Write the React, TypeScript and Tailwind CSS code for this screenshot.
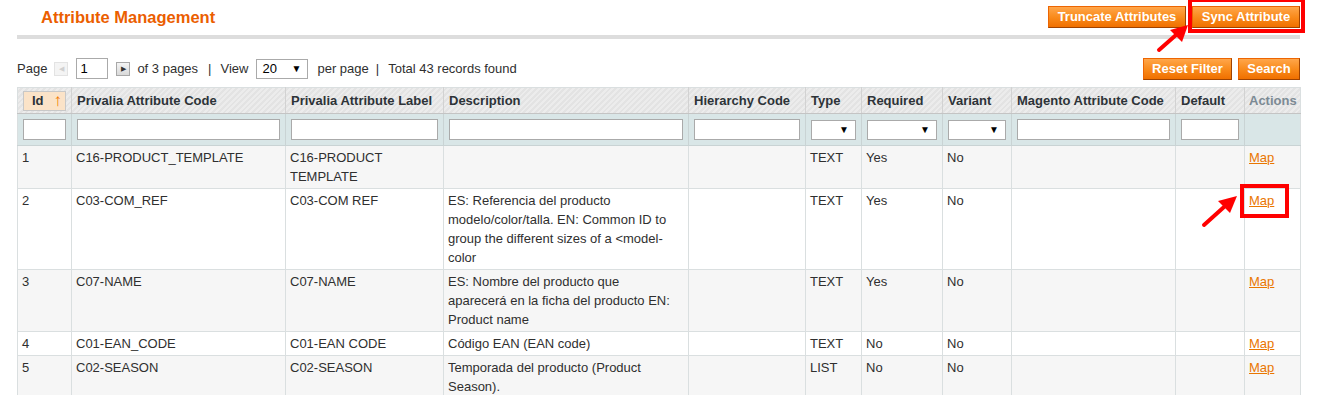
import React from "react";

const cols = [54, 214, 158, 245, 117, 56, 81, 69, 164, 69, 56];

const headers = [
  "Id",
  "Privalia Attribute Code",
  "Privalia Attribute Label",
  "Description",
  "Hierarchy Code",
  "Type",
  "Required",
  "Variant",
  "Magento Attribute Code",
  "Default",
  "Actions",
];

type Row = {
  id: string;
  code: string;
  label: string[];
  desc: string[];
  type: string;
  required: string;
  variant: string;
};

const rows: Row[] = [
  { id: "1", code: "C16-PRODUCT_TEMPLATE", label: ["C16-PRODUCT", "TEMPLATE"], desc: [], type: "TEXT", required: "Yes", variant: "No" },
  {
    id: "2",
    code: "C03-COM_REF",
    label: ["C03-COM REF"],
    desc: ["ES: Referencia del producto", "modelo/color/talla. EN: Common ID to", "group the different sizes of a <model-", "color"],
    type: "TEXT",
    required: "Yes",
    variant: "No",
  },
  {
    id: "3",
    code: "C07-NAME",
    label: ["C07-NAME"],
    desc: ["ES: Nombre del producto que", "aparecerá en la ficha del producto EN:", "Product name"],
    type: "TEXT",
    required: "Yes",
    variant: "No",
  },
  { id: "4", code: "C01-EAN_CODE", label: ["C01-EAN CODE"], desc: ["Código EAN (EAN code)"], type: "TEXT", required: "No", variant: "No" },
  {
    id: "5",
    code: "C02-SEASON",
    label: ["C02-SEASON"],
    desc: ["Temporada del producto (Product", "Season)."],
    type: "LIST",
    required: "No",
    variant: "No",
  },
];

function OrangeButton({ children, className = "" }: { children: React.ReactNode; className?: string }) {
  return (
    <button
      type="button"
      className={`h-[22px] px-[8px] text-[13px] font-bold text-white leading-none border border-t-[#ed6502] border-l-[#ed6502] border-b-[#a04300] border-r-[#a04300] bg-[linear-gradient(#ffa64a,#f98b1c_50%,#f07000)] ${className}`}
    >
      {children}
    </button>
  );
}

function FakeSelect({ width, value = "" }: { width: string; value?: string }) {
  return (
    <div className={`${width} h-[20px] bg-white border border-[#aaaaaa] flex items-center justify-between pl-[5px] pr-[6px]`}>
      <span className="text-[13px] text-black">{value}</span>
      <span className="text-[10px] text-black">▼</span>
    </div>
  );
}

function Cell({ children, last = false }: { children?: React.ReactNode; last?: boolean }) {
  return (
    <td className={`align-top px-[4px] pt-[2px] pb-[2px] border-b border-[#dadfe0] ${last ? "" : "border-r"}`}>{children}</td>
  );
}

export default function App() {
  return (
    <div className="relative w-[1323px] h-[395px] overflow-hidden bg-white text-[#2f2f2f] font-['Liberation_Sans',Arial,sans-serif] text-[13px] leading-[19px]">
      <div className="pl-[17px] w-[1300px]">
        {/* title bar */}
        <div className="flex items-center justify-between h-[35px] border-b-4 border-[#dddddd] box-content">
          <h1 className="pl-[24px] text-[16.5px] font-bold text-[#eb5e00] leading-none">Attribute Management</h1>
          <div className="flex gap-[6px] -mt-[2px]">
            <OrangeButton className="w-[138px]">Truncate Attributes</OrangeButton>
            <OrangeButton className="w-[108px]">Sync Attribute</OrangeButton>
          </div>
        </div>

        {/* pager */}
        <div className="flex items-center justify-between h-[48px] pt-[11px]">
          <div className="flex items-center">
            <span>Page</span>
            <span className="ml-[7px] w-[14px] h-[14px] border border-[#e3e3e3] bg-[#f4f4f4] flex items-center justify-center text-[7px] text-[#d0d0d0]">◀</span>
            <div className="ml-[8px] w-[32px] h-[21px] border border-[#aaaaaa] bg-white px-[3px] text-[13px] leading-[19px] text-black">1</div>
            <span className="ml-[8px] w-[14px] h-[14px] border border-[#a8a8a8] bg-[linear-gradient(#f4f4f4,#d9d9d9)] flex items-center justify-center text-[7px] text-[#333]">▶</span>
            <span className="ml-[7px]">of 3 pages</span>
            <span className="ml-[10px]">|</span>
            <span className="ml-[9px]">View</span>
            <div className="ml-[8px]">
              <FakeSelect width="w-[52px]" value="20" />
            </div>
            <span className="ml-[9px]">per page</span>
            <span className="ml-[7px]">|</span>
            <span className="ml-[9px]">Total 43 records found</span>
          </div>
          <div className="flex gap-[6px]">
            <OrangeButton className="w-[89px]">Reset Filter</OrangeButton>
            <OrangeButton className="w-[62px]">Search</OrangeButton>
          </div>
        </div>

        {/* grid */}
        <table className="table-fixed border-collapse w-[1283px] border border-[#dadfe0]">
          <colgroup>
            {cols.map((w, i) => (
              <col key={i} style={{ width: w }} />
            ))}
          </colgroup>
          <thead>
            <tr className="h-[26px] bg-[repeating-linear-gradient(135deg,#ececec_0px,#ececec_2px,#e3e3e3_2px,#e3e3e3_4px)]">
              {headers.map((h, i) => (
                <th
                  key={h}
                  className={`text-left font-bold align-middle border-b border-b-[#c4c4c4] ${i < headers.length - 1 ? "border-r border-r-[#d2d2d2]" : ""} ${i === 10 ? "text-[#7c8a94] px-[4px]" : "text-[#2d3338] px-[5px]"} ${i === 0 ? "px-[5px]" : ""}`}
                >
                  {i === 0 ? (
                    <div className="flex items-center justify-between h-[20px] pl-[8px] pr-[3px] border border-[#c8c8c8] bg-[#fbe3c8]">
                      <span>Id</span>
                      <span className="text-[#f27a00] font-normal text-[17px] leading-none">↑</span>
                    </div>
                  ) : (
                    h
                  )}
                </th>
              ))}
            </tr>
            <tr className="h-[32px] bg-[#d9e6e7]">
              {headers.map((h, i) => (
                <th key={h} className={`px-[5px] align-middle border-b border-[#c9d3d4] ${i < headers.length - 1 ? "border-r" : ""}`}>
                  {i >= 5 && i <= 7 ? (
                    <FakeSelect width="w-full" />
                  ) : i === 10 ? null : (
                    <div className="w-full h-[21px] bg-white border border-[#aaaaaa]" />
                  )}
                </th>
              ))}
            </tr>
          </thead>
          <tbody>
            {rows.map((r, idx) => (
              <tr key={r.id} className={idx % 2 === 0 ? "bg-[#f6f6f6]" : "bg-white"}>
                <Cell>{r.id}</Cell>
                <Cell>{r.code}</Cell>
                <Cell>
                  {r.label.map((l, i) => (
                    <div key={i}>{l}</div>
                  ))}
                </Cell>
                <Cell>
                  {r.desc.map((l, i) => (
                    <div key={i} className="whitespace-nowrap">{l}</div>
                  ))}
                </Cell>
                <Cell />
                <Cell>{r.type}</Cell>
                <Cell>{r.required}</Cell>
                <Cell>{r.variant}</Cell>
                <Cell />
                <Cell />
                <Cell last>
                  <a className="text-[#ea7601] underline">Map</a>
                </Cell>
              </tr>
            ))}
          </tbody>
        </table>
      </div>

      {/* annotations */}
      <div className="absolute left-[1188px] top-[-2px] w-[117px] h-[35px] border-4 border-[#ff0000]" />
      <div className="absolute left-[1240px] top-[184px] w-[49px] h-[34px] border-4 border-[#ff0000]" />
      <svg className="absolute left-0 top-0 pointer-events-none" width="1323" height="395">
        <line x1="1159" y1="50" x2="1176" y2="35" stroke="#ff0000" strokeWidth="4" strokeLinecap="round" />
        <polygon points="1188,25 1170,30 1182,42" fill="#ff0000" />
        <line x1="1204" y1="225" x2="1224" y2="207" stroke="#ff0000" strokeWidth="4" strokeLinecap="round" />
        <polygon points="1237,196 1218,201 1230,213" fill="#ff0000" />
      </svg>
    </div>
  );
}
